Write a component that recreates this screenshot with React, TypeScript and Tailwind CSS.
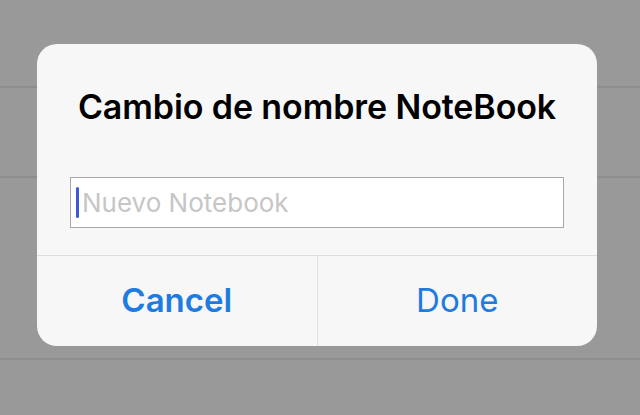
import React from "react";

export default function App() {
  return (
    <div
      className="relative w-[640px] h-[415px] bg-[#999999] overflow-hidden"
      style={{ fontFamily: 'Inter, "Liberation Sans", Arial, sans-serif' }}
    >
      <div className="absolute left-0 right-0 top-[86px] h-[2px] bg-[#8e8e8e]" />
      <div className="absolute left-0 right-0 top-[176px] h-[2px] bg-[#8e8e8e]" />
      <div className="absolute left-0 right-0 top-[358px] h-[2px] bg-[#8e8e8e]" />
      <div className="absolute left-[37px] top-[44px] w-[560px] h-[302px] bg-[#f7f7f7] rounded-[20px] flex flex-col overflow-hidden">
        <div className="h-[211px] flex flex-col items-center">
          <div className="mt-[43px] text-[34px] font-semibold text-black leading-[40px] tracking-[-0.1px]">
            Cambio de nombre NoteBook
          </div>
          <div className="mt-[50px] w-[494px] h-[51px] bg-white border border-[#a8a8a8] flex items-center pl-[5px]">
            <div className="w-[3px] h-[31px] bg-[#3b5bd6] rounded-full" />
            <span className="ml-[3px] text-[26px] text-[#c6c6c6]">Nuevo Notebook</span>
          </div>
        </div>
        <div className="h-px bg-[#dedede]" />
        <div className="flex-1 flex">
          <div className="flex-1 flex items-center justify-center text-[33px] font-semibold text-[#1e7be0]">
            Cancel
          </div>
          <div className="w-px bg-[#e2e2e2]" />
          <div className="flex-1 flex items-center justify-center text-[33px] text-[#1e7be0]">
            Done
          </div>
        </div>
      </div>
    </div>
  );
}
